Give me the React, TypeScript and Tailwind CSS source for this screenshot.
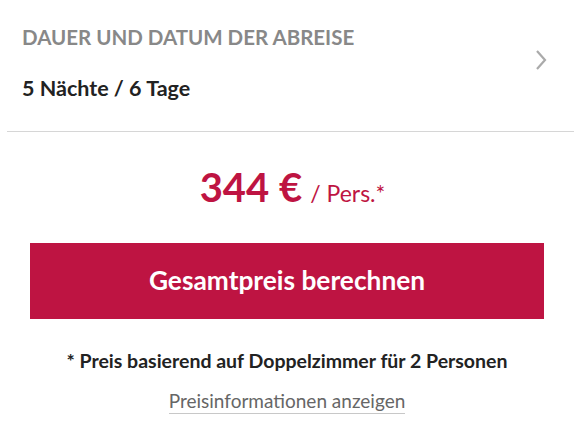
import React from "react";

export default function App() {
  return (
    <div className="w-[574px] h-[444px] bg-white overflow-hidden" style={{ fontFamily: "Lato, 'Noto Sans', sans-serif" }}>
      <div className="flex items-center pl-[22px] pr-[26px] pt-[24px] pb-[30px]">
        <div className="flex-1 flex flex-col">
          <div className="text-[20.5px] font-bold text-[#888888] leading-[26px]">DAUER UND DATUM DER ABREISE</div>
          <div className="text-[21.5px] font-bold text-[#222222] leading-[26px] mt-[25px]">5 Nächte / 6 Tage</div>
        </div>
        <svg width="14" height="22" viewBox="0 0 14 22" className="mb-[6px]">
          <path d="M3 2 L11 11 L3 20" fill="none" stroke="#aaaaaa" strokeWidth="2.2" />
        </svg>
      </div>
      <div className="ml-[7px] h-[1px] bg-[#d6d6d6]" />
      <div className="flex items-baseline justify-center mt-[29px] pl-[11px] text-[#be1442]">
        <span className="text-[40px] font-bold leading-[52px]">344 €</span>
        <span className="text-[23px] ml-[8px]">/ Pers.*</span>
      </div>
      <div className="mx-[30px] mt-[30px] h-[76px] bg-[#be1442] flex items-center justify-center">
        <span className="text-white text-[26.3px] font-bold">Gesamtpreis berechnen</span>
      </div>
      <div className="text-center text-[19.5px] font-bold text-[#222222] mt-[30px] leading-[24px]">* Preis basierend auf Doppelzimmer für 2 Personen</div>
      <div className="flex justify-center mt-[16px]">
        <span className="text-[19px] text-[#666666] leading-[24px] border-b border-[#c8c8c8]">Preisinformationen anzeigen</span>
      </div>
    </div>
  );
}
